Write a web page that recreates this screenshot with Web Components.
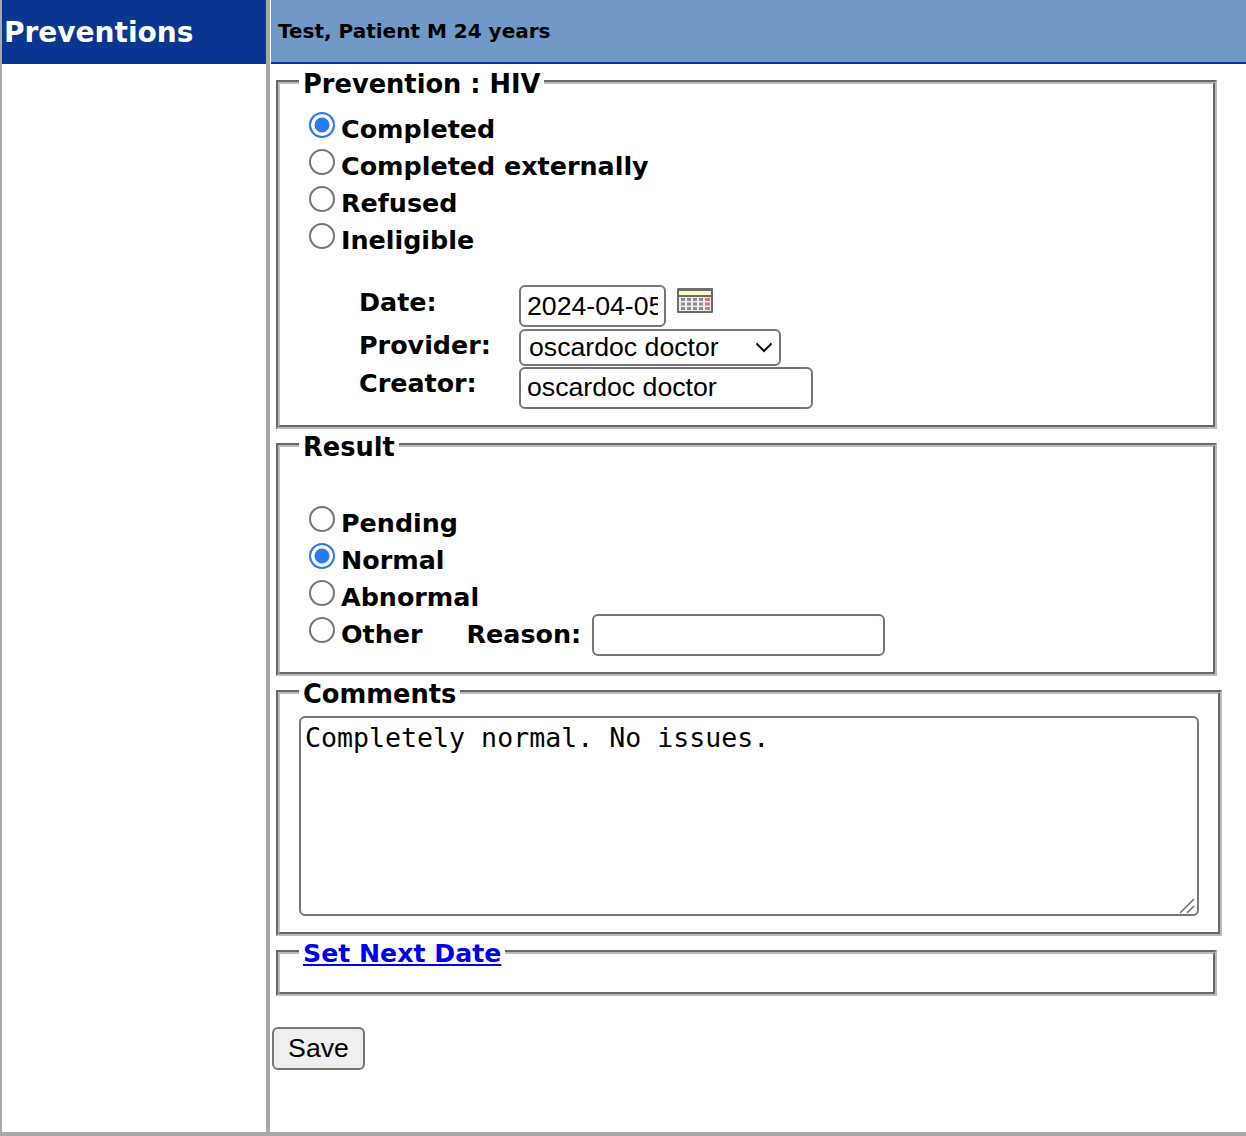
<!DOCTYPE html>
<html>
<head>
<meta charset="utf-8">
<title>Preventions</title>
<style>
  html, body { margin: 0; padding: 0; background: #fff; }
  body { font-family: "DejaVu Sans", Verdana, sans-serif; }
</style>
</head>
<body>
<prevention-page>
  <span slot="title">Preventions</span>
  <span slot="patient">Test, Patient M 24 years</span>

  <form-group>
    <span slot="legend">Prevention : HIV</span>
    <radio-option name="status" checked>Completed</radio-option>
    <radio-option name="status">Completed externally</radio-option>
    <radio-option name="status">Refused</radio-option>
    <radio-option name="status">Ineligible</radio-option>
    <field-grid>
      <field-label style="height:43px;padding-top:1px">Date:</field-label>
      <date-field value="2024-04-05"></date-field>
      <field-label style="height:38px">Provider:</field-label>
      <select-field value="oscardoc doctor"></select-field>
      <field-label style="height:42px">Creator:</field-label>
      <text-field value="oscardoc doctor"></text-field>
    </field-grid>
  </form-group>

  <form-group spacer>
    <span slot="legend">Result</span>
    <radio-option name="result">Pending</radio-option>
    <radio-option name="result" checked>Normal</radio-option>
    <radio-option name="result">Abnormal</radio-option>
    <radio-option name="result">Other<reason-field label="Reason:"></reason-field></radio-option>
  </form-group>

  <form-group wide>
    <span slot="legend">Comments</span>
    <comment-box value="Completely normal. No issues."></comment-box>
  </form-group>

  <form-group compact>
    <a slot="legend" href="#" style="color:#0000ee;font-size:25.2px">Set Next Date</a>
  </form-group>

  <save-button>Save</save-button>
</prevention-page>

<script>
// main frame: sidebar on the left, header + form on the right
class PreventionPage extends HTMLElement {
  constructor() {
    super();
    this.attachShadow({mode: 'open'}).innerHTML = `
      <style>
        :host {
          display: grid;
          grid-template-columns: 268px 1fr;
          box-sizing: border-box;
          height: 1136px;
          border-left: 2px solid #a9a9a9;
          border-bottom: 4px solid #a9a9a9;
          font-family: "DejaVu Sans", Verdana, sans-serif;
          color: #000;
        }
        .side { border-right: 4px solid #a9a9a9; }
        .title {
          height: 64px;
          display: flex;
          align-items: center;
          background: #0a3692;
          color: #fff;
          font-size: 28px;
          font-weight: bold;
          padding-left: 2px;
        }
        .bar {
          box-sizing: border-box;
          height: 64px;
          margin-left: 1px;
          display: flex;
          align-items: center;
          padding-left: 7px;
          background: #7099c8;
          border-bottom: 2px solid #0a3692;
          font-size: 20px;
          font-weight: bold;
        }
        .form { padding: 0 0 0 6px; }
      </style>
      <div class="side"><div class="title"><slot name="title"></slot></div></div>
      <div>
        <div class="bar"><slot name="patient"></slot></div>
        <div class="form"><slot></slot></div>
      </div>`;
  }
}

class FormGroup extends HTMLElement {
  constructor() {
    super();
    this.attachShadow({mode: 'open'}).innerHTML = `
      <style>
        :host { display: block; width: 941px; margin-bottom: -2px; }
        :host([wide]) { width: 946px; margin-bottom: -3px; }
        fieldset {
          margin: 0;
          padding: 10px 19px 16px 19px;
          border: 4px groove #bbb;
          min-width: 0;
        }
        :host([spacer]) fieldset { padding-top: 41px; padding-bottom: 20px; }
        :host([wide]) fieldset { padding: 6px 19px 16px 19px; }
        :host([compact]) fieldset { padding: 0 19px 22px 19px; }
        legend {
          margin-left: 0;
          padding: 4px 4px 0;
          font-size: 25.7px;
          font-weight: bold;
          line-height: 32px;
        }
      </style>
      <fieldset>
        <legend><slot name="legend"></slot></legend>
        <slot></slot>
      </fieldset>`;
  }
}

class RadioOption extends HTMLElement {
  constructor() {
    super();
    const name = this.getAttribute('name');
    const checked = this.hasAttribute('checked') ? 'checked' : '';
    this.attachShadow({mode: 'open'}).innerHTML = `
      <style>
        :host { display: block; height: 37px; }
        label {
          box-sizing: border-box;
          display: flex;
          align-items: center;
          height: 37px;
          padding-top: 1px;
          font-size: 25.4px;
          font-weight: bold;
        }
        input {
          appearance: none;
          box-sizing: border-box;
          width: 26px;
          height: 26px;
          margin: -9px 6px 0 10px;
          flex: none;
          border: 2px solid #767676;
          border-radius: 50%;
          background: #fff;
        }
        input:checked {
          border-color: #2b78f5;
          background: #2b78f5;
          box-shadow: inset 0 0 0 3.5px #fff;
        }
      </style>
      <label><input type="radio" name="${name}" ${checked}><slot></slot></label>`;
  }
}

class FieldGrid extends HTMLElement {
  constructor() {
    super();
    this.attachShadow({mode: 'open'}).innerHTML = `
      <style>
        :host {
          display: grid;
          grid-template-columns: 160px 1fr;
          margin: 27px 0 0 60px;
          align-items: start;
        }
      </style>
      <slot></slot>`;
  }
}

class FieldLabel extends HTMLElement {
  constructor() {
    super();
    this.attachShadow({mode: 'open'}).innerHTML = `
      <style>
        :host {
          display: block;
          font-size: 25.4px;
          font-weight: bold;
          line-height: 32px;
        }
      </style>
      <slot></slot>`;
  }
}

const inputStyle = `
  input, select {
    box-sizing: border-box;
    display: block;
    margin: 0;
    border: 2px solid #767676;
    border-radius: 6px;
    background: #fff;
    color: #000;
    font-family: "Liberation Sans", Arial, sans-serif;
    font-size: 26.67px;
  }
  input { padding: 2px 6px; height: 42px; width: 294px; }
`;

class TextField extends HTMLElement {
  constructor() {
    super();
    this.attachShadow({mode: 'open'}).innerHTML = `
      <style>
        :host { display: block; }
        ${inputStyle}
        input { padding: 1px 6px 3px; }
      </style>
      <input type="text" value="${this.getAttribute('value') || ''}">`;
  }
}

class DateField extends HTMLElement {
  constructor() {
    super();
    this.attachShadow({mode: 'open'}).innerHTML = `
      <style>
        :host { display: flex; align-items: flex-start; gap: 11px; height: 44px; }
        ${inputStyle}
        input { width: 147px; }
        svg { margin-top: 3px; }
      </style>
      <input type="text" value="${this.getAttribute('value')}">
      <svg width="36" height="25" viewBox="0 0 36 25">
        <rect width="36" height="25" rx="1" fill="#6c6c6c"/>
        <rect x="2" y="3" width="32" height="20" fill="#eeeeee"/>
        <rect x="2" y="3" width="32" height="4" fill="#fbfac4"/>
        <rect x="2" y="7" width="32" height="2" fill="#6c6c6c"/>
        <g fill="#8c8c8c">
          <path d="M4 10h4v3H4zM10 10h4v3h-4zM16 10h4v3h-4zM22 10h4v3h-4z"/>
          <path d="M4 14.500h4v3H4zM10 14.500h4v3h-4zM16 14.500h4v3h-4zM22 14.500h4v3h-4z"/>
          <path d="M4 19h4v3H4zM10 19h4v3h-4zM16 19h4v3h-4zM22 19h4v3h-4z"/>
        </g>
        <path fill="#f46a6a" d="M28 10h5v3h-5zM28 14.500h5v3h-5zM28 19h5v3h-5z"/>
      </svg>`;
  }
}

class SelectField extends HTMLElement {
  constructor() {
    super();
    const v = this.getAttribute('value');
    this.attachShadow({mode: 'open'}).innerHTML = `
      <style>
        :host { display: block; position: relative; width: 262px; height: 38px; }
        ${inputStyle}
        select { appearance: none; width: 262px; height: 37px; padding: 0 0 1px 8px; }
        svg { position: absolute; right: 8px; top: 13px; pointer-events: none; }
      </style>
      <select><option>${v}</option></select>
      <svg width="18" height="11" viewBox="0 0 18 11">
        <path d="M1.500 1.500 9 9 16.500 1.500" fill="none" stroke="#000" stroke-width="2"/>
      </svg>`;
  }
}

class ReasonField extends HTMLElement {
  constructor() {
    super();
    this.attachShadow({mode: 'open'}).innerHTML = `
      <style>
        :host { display: inline-flex; align-items: center; gap: 11px; margin-left: 44px; }
        ${inputStyle}
        input { margin-top: 2px; width: 293px; }
      </style>
      <span>${this.getAttribute('label')}</span>
      <input type="text">`;
  }
}

class CommentBox extends HTMLElement {
  constructor() {
    super();
    this.attachShadow({mode: 'open'}).innerHTML = `
      <style>
        :host { display: block; position: relative; width: 900px; }
        textarea {
          box-sizing: border-box;
          display: block;
          width: 900px;
          height: 200px;
          margin: 0;
          padding: 4px 4px 4px;
          border: 2px solid #767676;
          border-radius: 6px;
          resize: none;
          font-family: "DejaVu Sans Mono", monospace;
          font-size: 26.6px;
          color: #000;
        }
        svg { position: absolute; right: 2px; bottom: 2px; pointer-events: none; }
      </style>
      <textarea>${this.getAttribute('value')}</textarea>
      <svg width="18" height="16" viewBox="0 0 18 16">
        <path d="M1 15 15 1M8 15 15 8" fill="none" stroke="#6e6e6e" stroke-width="1.500"/>
      </svg>`;
  }
}

class SaveButton extends HTMLElement {
  constructor() {
    super();
    this.attachShadow({mode: 'open'}).innerHTML = `
      <style>
        :host { display: block; margin: 33px 0 0 -4px; }
        button {
          box-sizing: border-box;
          width: 93px;
          height: 43px;
          padding: 0;
          border: 2px solid #767676;
          border-radius: 6px;
          background: #efefef;
          font-family: "Liberation Sans", Arial, sans-serif;
          font-size: 26.67px;
          color: #000;
        }
      </style>
      <button type="button"><slot></slot></button>`;
  }
}

customElements.define('prevention-page', PreventionPage);
customElements.define('form-group', FormGroup);
customElements.define('radio-option', RadioOption);
customElements.define('field-grid', FieldGrid);
customElements.define('field-label', FieldLabel);
customElements.define('text-field', TextField);
customElements.define('date-field', DateField);
customElements.define('select-field', SelectField);
customElements.define('reason-field', ReasonField);
customElements.define('comment-box', CommentBox);
customElements.define('save-button', SaveButton);
</script>
</body>
</html>
